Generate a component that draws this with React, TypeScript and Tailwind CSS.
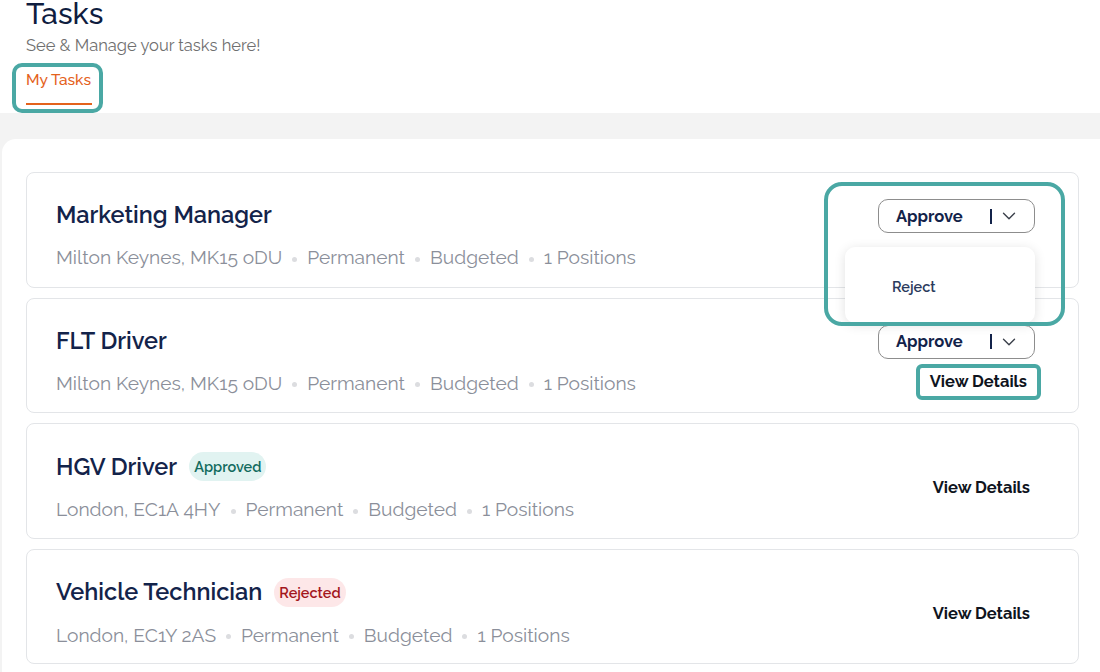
import { ChevronDown } from 'lucide-react'

type Task = {
    title: string
    location: string
    status?: 'approved' | 'rejected'
    pending?: boolean
}

const tasks: Task[] = [
    { title: 'Marketing Manager', location: 'Milton Keynes, MK15 oDU', pending: true },
    { title: 'FLT Driver', location: 'Milton Keynes, MK15 oDU', pending: true },
    { title: 'HGV Driver', location: 'London, EC1A 4HY', status: 'approved' },
    { title: 'Vehicle Technician', location: 'London, EC1Y 2AS', status: 'rejected' },
]

const font = { fontFamily: 'Raleway, Lato, "Noto Sans", sans-serif' }

function Dot() {
    return <span className="mx-[10px] inline-block h-[5px] w-[5px] rounded-full bg-[#dcdde0] align-middle" />
}

function ApproveButton() {
    return (
        <button className="flex h-[34px] w-[157px] items-center rounded-[10px] border border-[#8d8d8d] bg-white pl-[17px] pr-[14px] text-[16.5px] font-bold text-[#13234a]">
            <span className="flex-1 text-left">Approve</span>
            <span className="mr-[6px] h-[15px] w-[2px] bg-[#13234a]" />
            <ChevronDown className="h-[22px] w-[22px] text-[#3a3f4a]" strokeWidth={1.5} />
        </button>
    )
}

function TaskCard({ task, index }: { task: Task; index: number }) {
    return (
        <div className="relative flex h-[115.5px] items-start justify-between rounded-[8px] border border-[#e3e5e8] bg-white pl-[29px] pr-[44px]">
            <div className="pt-[28px]">
                <div className="flex items-center">
                    <h3 className="text-[23.5px] leading-[28px] font-semibold text-[#13234a]">{task.title}</h3>
                    {task.status === 'approved' && (
                        <span className="ml-[12px] rounded-full bg-[#e1f3f1] px-[5px] py-[5px] text-[14.5px] leading-[19px] font-semibold text-[#126b5e]">
                            Approved
                        </span>
                    )}
                    {task.status === 'rejected' && (
                        <span className="ml-[12px] rounded-full bg-[#fde7e8] px-[5px] py-[5px] text-[14.5px] leading-[19px] font-semibold text-[#a3161c]">
                            Rejected
                        </span>
                    )}
                </div>
                <p className="mt-[16px] text-[19.2px] leading-[24px] text-[#8b8f9a]">
                    {task.location}
                    <Dot />
                    Permanent
                    <Dot />
                    Budgeted
                    <Dot />
                    1 Positions
                </p>
            </div>

            {task.pending ? (
                <div className="-mr-[43px] flex flex-col items-end pt-[26px]">
                    <div className="mr-[42px]">
                        <ApproveButton />
                    </div>
                    <div className="relative mt-[5px] mr-[36px] rounded-[6px] px-[14px] py-[6px]">
                        {index === 1 && (
                            <span className="absolute inset-0 rounded-[6px] border-[4px] border-[#4aa8a4]" />
                        )}
                        <span className="text-[16.5px] leading-[22px] font-bold text-[#0f1420]">View Details</span>
                    </div>
                </div>
            ) : (
                <div className="self-center pt-[14px] pr-[4px] text-[16.5px] font-bold text-[#0f1420]">View Details</div>
            )}

            {index === 0 && (
                <>
                    <div className="absolute top-[74px] right-[43px] z-10 h-[76px] w-[190px] rounded-[10px] bg-white shadow-[0_2px_12px_rgba(0,0,0,0.12)]">
                        <div className="pt-[29px] pl-[47px] text-[14.5px] font-semibold text-[#2b3a5c]">Reject</div>
                    </div>
                    <div className="absolute top-[9px] right-[13px] z-20 h-[144px] w-[241px] rounded-[18px] border-[4px] border-[#4aa8a4]" />
                </>
            )}
        </div>
    )
}

export default function App() {
    return (
        <div className="min-h-[672px] w-[1100px] overflow-hidden bg-[#f3f3f3]" style={font}>
            {/* Header */}
            <div className="bg-white pl-[26px]">
                <h1 className="-mt-[3px] text-[30px] leading-[34px] font-medium text-[#0f1d3f]">Tasks</h1>
                <p className="mt-[4px] text-[16.5px] leading-[20px] text-[#6f6f6f]">See &amp; Manage your tasks here!</p>
                <div className="relative mt-[9px] inline-flex flex-col">
                    <span className="absolute -top-[1px] -right-[11px] bottom-0 -left-[14px] rounded-[10px] border-[4px] border-[#4aa8a4]" />
                    <span className="pt-[6px] text-[15.5px] leading-[20px] font-medium text-[#e4621c]">My Tasks</span>
                    <span className="mt-[13px] h-[2px] w-[66px] bg-[#e4621c]" />
                    <span className="h-[8px]" />
                </div>
            </div>

            {/* Content */}
            <div className="pt-[26px] pl-[2px]">
                <div className="flex flex-col gap-[10px] rounded-tl-[14px] bg-white pt-[33px] pr-[21px] pb-[10px] pl-[24px]">
                    {tasks.map((task, i) => (
                        <TaskCard key={task.title} task={task} index={i} />
                    ))}
                </div>
            </div>
        </div>
    )
}
